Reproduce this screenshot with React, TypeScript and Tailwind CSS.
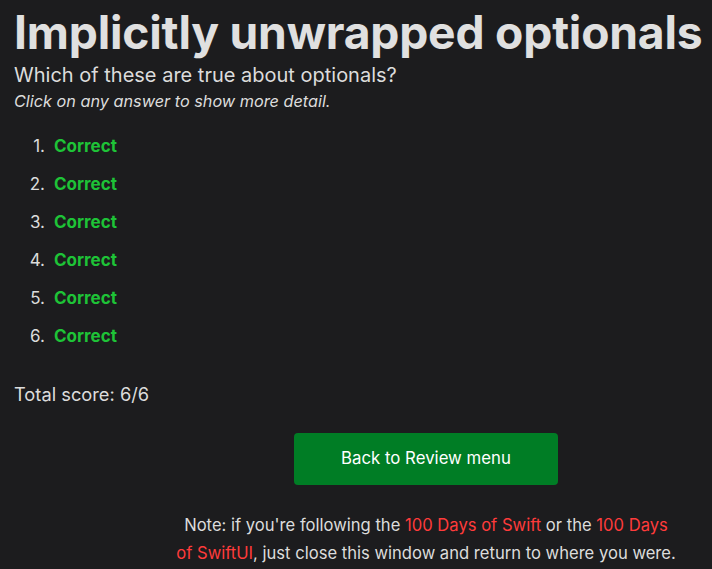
export default function App() {
  const answers = [1, 2, 3, 4, 5, 6];

  return (
    <div className="min-h-screen bg-[#1c1c1e] text-[#dcdcdc] font-['Inter',sans-serif] px-[14px] pt-[2px] overflow-hidden">
      <h1 className="text-[46.2px] font-bold leading-[60px] tracking-[-0.2px] whitespace-nowrap text-[#e0e0e0]">
        Implicitly unwrapped optionals
      </h1>
      <p className="text-[20px] leading-[26px]">Which of these are true about optionals?</p>
      <p className="text-[16.25px] italic leading-[26px]">Click on any answer to show more detail.</p>

      <ol className="mt-[20px] text-[17px]">
        {answers.map((n) => (
          <li key={n} className="h-[38px] leading-[24px] flex">
            <span className="w-[31px] text-right">{n}.</span>
            <span className="ml-[9px] font-bold text-[#1ec337]">Correct</span>
          </li>
        ))}
      </ol>

      <p className="text-[18.3px] leading-[26px] mt-[19px]">Total score: 6/6</p>

      <div className="ml-[161px] w-[502px] flex flex-col items-center">
        <button className="mt-[26px] w-[264px] h-[52px] rounded-[4px] bg-[#007d25] text-white text-[16.8px]">
          Back to Review menu
        </button>
        <p className="mt-[26px] text-center text-[16.6px] leading-[28px]">
          Note: if you're following the <span className="text-[#ff3b3b]">100 Days of Swift</span> or the{" "}
          <span className="text-[#ff3b3b]">100 Days of SwiftUI</span>, just close this window and return to where you were.
        </p>
      </div>
    </div>
  );
}
